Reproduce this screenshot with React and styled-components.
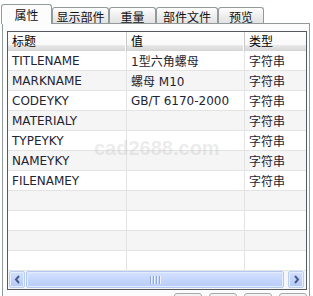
import React from 'react';
import styled, { createGlobalStyle } from 'styled-components';

const GlobalStyle = createGlobalStyle`
  html, body {
    margin: 0;
    padding: 0;
    background: #ffffff;
    overflow: hidden;
  }
  body {
    font-family: "DejaVu Sans", "Noto Sans CJK SC", sans-serif;
    font-size: 12px;
    color: #1e2433;
  }
`;

const tabs = [
  { label: '属性', w: 51 },
  { label: '显示部件', w: 57 },
  { label: '重量', w: 47 },
  { label: '部件文件', w: 62 },
  { label: '预览', w: 46 },
];

const rows = [
  { key: 'TITLENAME', value: '1型六角螺母', type: '字符串' },
  { key: 'MARKNAME', value: '螺母 M10', type: '字符串' },
  { key: 'CODEYKY', value: 'GB/T 6170-2000', type: '字符串' },
  { key: 'MATERIALY', value: '', type: '字符串' },
  { key: 'TYPEYKY', value: '', type: '字符串' },
  { key: 'NAMEYKY', value: '', type: '字符串' },
  { key: 'FILENAMEY', value: '', type: '字符串' },
  { key: '', value: '', type: '' },
  { key: '', value: '', type: '' },
  { key: '', value: '', type: '' },
  { key: '', value: '', type: '' },
];

export default function App() {
  return (
    <Page>
      <GlobalStyle />
      <TabBar>
        {tabs.map((t, i) => (
          <Tab key={t.label} w={t.w} active={i === 0}>{t.label}</Tab>
        ))}
      </TabBar>
      <Panel>
        <Table>
          <Header>
            <HeadCell>标题</HeadCell>
            <HeadCell>值</HeadCell>
            <HeadCell last>类型</HeadCell>
          </Header>
          <Body>
            {rows.map((r, i) => (
              <Row key={i} odd={i % 2 === 1}>
                <Cell>{r.key}</Cell>
                <Cell>{r.value}</Cell>
                <Cell last>{r.type}</Cell>
              </Row>
            ))}
            <Watermark>cad2688.com</Watermark>
          </Body>
          <ScrollBar>
            <ArrowButton>
              <svg width="7" height="9" viewBox="0 0 7 9">
                <path d="M5 1 L2 4.5 L5 8" fill="none" stroke="#4a5d86" strokeWidth="2" />
              </svg>
            </ArrowButton>
            <Thumb>
              <Grip>
                <i /><i /><i /><i />
              </Grip>
            </Thumb>
            <ArrowButton>
              <svg width="7" height="9" viewBox="0 0 7 9">
                <path d="M2 1 L5 4.5 L2 8" fill="none" stroke="#4a5d86" strokeWidth="2" />
              </svg>
            </ArrowButton>
          </ScrollBar>
        </Table>
        <ButtonRow>
          <SmallButton />
          <SmallButton />
          <SmallButton />
          <SmallButton />
        </ButtonRow>
      </Panel>
    </Page>
  );
}

const Page = styled.div`
  padding: 4px 3px 0 2px;
  height: 296px;
  box-sizing: border-box;
  overflow: hidden;
`;

const TabBar = styled.div`
  display: flex;
  align-items: flex-end;
  height: 19px;
  margin-left: -1px;
`;

const Tab = styled.div`
  position: relative;
  z-index: ${p => (p.active ? 2 : 1)};
  box-sizing: border-box;
  width: ${p => p.w}px;
  height: ${p => (p.active ? 20 : 16)}px;
  margin-bottom: ${p => (p.active ? -1 : 0)}px;
  display: flex;
  align-items: center;
  justify-content: center;
  border: 1px solid #919b9c;
  border-bottom: none;
  border-radius: 3px 3px 0 0;
  background: ${p =>
    p.active
      ? '#fcfcfc'
      : 'linear-gradient(to bottom, #ffffff 0%, #f0f0f0 45%, #e2e2e2 100%)'};
  color: #111;
  font-size: 12px;
  padding-top: ${p => (p.active ? 0 : 1)}px;
`;

const Panel = styled.div`
  border: 1px solid #919b9c;
  border-bottom: none;
  background: #fcfcfc;
  padding: 7px 3px 0 4px;
  height: 273px;
  box-sizing: border-box;
  overflow: hidden;
`;

const Table = styled.div`
  width: 300px;
  height: 259px;
  box-sizing: border-box;
  border: 1px solid #555a60;
  background: #ffffff;
  display: flex;
  flex-direction: column;
`;

const Header = styled.div`
  display: grid;
  grid-template-columns: 119px 118px 1fr;
  height: 19px;
  flex: none;
  box-sizing: border-box;
  border-bottom: 1px solid #d4d4d4;
  background: linear-gradient(to bottom, #ffffff 0%, #f9f9f9 70%, #e6e6e6 76%, #dadada 100%);
`;

const HeadCell = styled.div`
  display: flex;
  align-items: center;
  padding-left: 4px;
  padding-bottom: 2px;
  color: #000;
  border-right: ${p => (p.last ? 'none' : '1px solid #c8c8c8')};
  box-shadow: ${p => (p.last ? 'none' : 'inset -1px 0 0 #ffffff')};
`;

const Body = styled.div`
  position: relative;
  flex: 1;
  overflow: hidden;
`;

const Row = styled.div`
  display: grid;
  grid-template-columns: 119px 118px 1fr;
  height: 20px;
  box-sizing: border-box;
  border-bottom: 1px solid #e3e3e3;
  background: ${p => (p.odd ? '#f5f5f5' : '#ffffff')};
`;

const Cell = styled.div`
  display: flex;
  align-items: center;
  padding-left: 4px;
  white-space: nowrap;
  overflow: hidden;
  border-right: ${p => (p.last ? 'none' : '1px solid #e3e3e3')};
`;

const Watermark = styled.div`
  position: absolute;
  left: 86px;
  top: 86px;
  font-family: "Liberation Sans", Arial, sans-serif;
  font-weight: bold;
  font-size: 20px;
  color: rgba(180, 180, 180, 0.25);
  pointer-events: none;
`;

const ScrollBar = styled.div`
  display: flex;
  align-items: stretch;
  height: 17px;
  flex: none;
  padding: 0 2px 1px 1px;
  background: #f6f6f4;
  gap: 1px;
`;

const ArrowButton = styled.div`
  width: 16px;
  box-sizing: border-box;
  border: 1px solid #b9cdf5;
  border-radius: 2px;
  background: linear-gradient(to bottom, #d3e0fd 0%, #bfd2fb 60%, #b2c8f8 100%);
  box-shadow: inset 0 0 0 1px #e6eeff;
  display: flex;
  align-items: center;
  justify-content: center;
`;

const Thumb = styled.div`
  flex: 1;
  margin-right: 3px;
  box-sizing: border-box;
  border: 1px solid #b4c8f4;
  border-radius: 2px;
  background: linear-gradient(to bottom, #d6e2fe 0%, #c4d5fc 55%, #b9ccf9 100%);
  box-shadow: inset 0 0 0 1px #e3ebff;
  display: flex;
  align-items: center;
  justify-content: center;
`;

const Grip = styled.div`
  display: flex;
  gap: 1px;
  i {
    display: block;
    width: 1px;
    height: 8px;
    background: #8ea7e2;
    box-shadow: 1px 0 0 #eef3ff;
    margin-right: 1px;
  }
`;

const ButtonRow = styled.div`
  display: flex;
  justify-content: flex-end;
  gap: 7px;
  width: 300px;
  margin-top: 3px;
`;

const SmallButton = styled.div`
  width: 28px;
  height: 20px;
  box-sizing: border-box;
  border: 1px solid #a8a8a8;
  border-radius: 3px;
  background: linear-gradient(to bottom, #f4f4f4, #e0e0e0);
`;
